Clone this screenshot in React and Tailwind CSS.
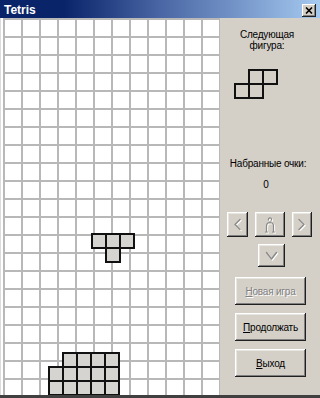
import React from "react";

const btn =
  "bg-[#d4d0c8] shadow-[inset_-1px_-1px_#202020,inset_1px_1px_#ffffff,inset_-2px_-2px_#808080,inset_2px_2px_#e8e6e0] flex items-center justify-center";

function Emboss({ w, h, d, sw = 1.4 }) {
  return (
    <svg width={w} height={h} viewBox={`0 0 ${w} ${h}`} fill="none">
      <g transform="translate(1 1)">
        <path d={d} stroke="#ffffff" strokeWidth={sw} strokeLinecap="round" strokeLinejoin="round" />
      </g>
      <path d={d} stroke="#8a8a8a" strokeWidth={sw} strokeLinecap="round" strokeLinejoin="round" />
    </svg>
  );
}

function Cell({ x, y }) {
  return (
    <div
      className="absolute w-[16px] h-[16px] border-2 border-[#111] bg-[#d6d4d0]"
      style={{ left: x, top: y }}
    />
  );
}

export default function App() {
  const gridCells = Array.from({ length: 12 * 21 });
  const pile = [];
  [1, 2, 3, 4].forEach((c) => pile.push([47 + 14 * c, 334]));
  [0, 1, 2, 3, 4].forEach((c) => pile.push([47 + 14 * c, 348]));
  [0, 1, 2, 3, 4].forEach((c) => pile.push([47 + 14 * c, 362]));
  const tPiece = [
    [90, 215],
    [104, 215],
    [118, 215],
    [104, 229],
  ];

  return (
    <div className="w-[320px] h-[398px] overflow-hidden flex flex-col bg-white font-[Liberation_Sans,Arial,sans-serif]">
      {/* Title bar */}
      <div className="h-[18px] shrink-0 flex items-center justify-between pt-[2px] pl-[4px] pr-[4px] bg-linear-to-r from-[#0a246a] from-[20%] via-[#4a66a4] via-[50%] to-[#a6caf0]">
        <span className="text-white font-bold text-[12px] leading-none">Tetris</span>
        <div className="w-[14px] h-[13px] bg-[#d4d0c8] shadow-[inset_-1px_-1px_#202020,inset_1px_1px_#ffffff,inset_-2px_-2px_#808080] flex items-center justify-center">
          <svg width="8" height="7" viewBox="0 0 8 7">
            <path d="M1 0.5 L7 6.5 M7 0.5 L1 6.5" stroke="#000" strokeWidth="1.6" />
          </svg>
        </div>
      </div>

      <div className="flex h-[377px] shrink-0">
        {/* Board */}
        <div className="relative w-[220px] h-[377px] overflow-hidden bg-white pl-[2px] border-l border-[#dcdcdc]">
          <div className="grid grid-cols-[repeat(12,18px)] border-r-2 border-[#b8b8b8] w-max">
            {gridCells.map((_, i) => (
              <div key={i} className="h-[18px] border-l-2 border-t-2 border-[#b8b8b8]" />
            ))}
          </div>
          {pile.map(([x, y], i) => (
            <Cell key={"p" + i} x={x} y={y} />
          ))}
          {tPiece.map(([x, y], i) => (
            <Cell key={"t" + i} x={x} y={y} />
          ))}
        </div>

        {/* Sidebar */}
        <div className="w-[100px] h-[377px] bg-[#d4d0c8] flex flex-col text-[10px] leading-[11px] tracking-[-0.2px] text-black">
          <div className="mt-[11px] pr-[6px] text-center">
            Следующая
            <br />
            фигура:
          </div>
          <div className="mt-[18px] ml-[14px]">
            <svg width="44" height="30" viewBox="0 0 44 30" fill="none">
              <rect x="15" y="1" width="14" height="14" stroke="#111" strokeWidth="2" />
              <rect x="29" y="1" width="14" height="14" stroke="#111" strokeWidth="2" />
              <rect x="1" y="15" width="14" height="14" stroke="#111" strokeWidth="2" />
              <rect x="15" y="15" width="14" height="14" stroke="#111" strokeWidth="2" />
            </svg>
          </div>
          <div className="mt-[59px] pr-[4px] text-center whitespace-nowrap">Набранные очки:</div>
          <div className="mt-[10px] pr-[8px] text-center">0</div>

          <div className="mt-[22px] ml-[7px] flex gap-[7px]">
            <div className={`${btn} w-[21px] h-[25px]`}>
              <Emboss w={10} h={13} d="M7 1.5 L2 6.5 L7 11.5" />
            </div>
            <div className={`${btn} w-[30px] h-[25px]`}>
              <Emboss
                w={13}
                h={18}
                d="M2.5 16 L2.5 10 A3.5 3.5 0 0 1 9.5 10 L9.5 16 M1.5 16 L3.5 16 M8.5 16 L10.5 16 M4.5 4 A1.6 1.6 0 1 1 7.5 4 M6 5.5 L6 7"
                sw={1.2}
              />
            </div>
            <div className={`${btn} w-[20px] h-[25px]`}>
              <Emboss w={10} h={13} d="M2 1.5 L7 6.5 L2 11.5" />
            </div>
          </div>

          <div className={`${btn} mt-[7px] ml-[38px] w-[27px] h-[23px]`}>
            <Emboss w={14} h={10} d="M1.5 1.5 L6.5 8 L11.5 1.5" />
          </div>

          <div className={`${btn} mt-[10px] ml-[15px] w-[71px] h-[28px]`}>
            <span className="text-[#808080] [text-shadow:1px_1px_0_#ffffff]">
              <span className="underline">Н</span>овая игра
            </span>
          </div>
          <div className={`${btn} mt-[8px] ml-[15px] w-[71px] h-[28px]`}>
            <span>
              <span className="underline">П</span>родолжать
            </span>
          </div>
          <div className={`${btn} mt-[8px] ml-[15px] w-[71px] h-[28px]`}>
            <span>
              <span className="underline">В</span>ыход
            </span>
          </div>
        </div>
      </div>

      <div className="h-[3px] shrink-0 bg-[#404040]" />
    </div>
  );
}
